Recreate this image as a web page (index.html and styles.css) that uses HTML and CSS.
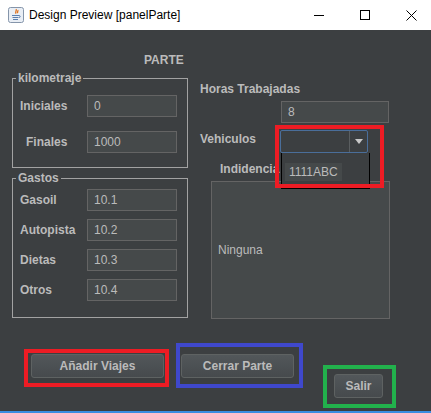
FILE: index.html
```html
<!DOCTYPE html>
<html lang="es">
<head>
<meta charset="utf-8">
<title>Design Preview [panelParte]</title>
<link rel="stylesheet" href="styles.css">
</head>
<body>
<div class="window">
  <header class="titlebar">
    <svg class="app-icon" width="16" height="16" viewBox="0 0 16 16">
      <rect x="0.5" y="0.5" width="15" height="15" rx="2" fill="#e9eef5" stroke="#8595aa"/>
      <path d="M8 2.2c1.2 1.4-1.2 2.4 0 4.4M9.8 3.2c.6 1-1 1.6 0 3" stroke="#e0701a" stroke-width="1.3" fill="none"/>
      <path d="M4 8.5h7M4.5 10.5h6M5 12.5h5M11 8.5c1.6 0 1.6 2 0 2" stroke="#5b7fb0" fill="none"/>
    </svg>
    <span class="title-text">Design Preview [panelParte]</span>
    <div class="controls">
      <span class="ctl"><svg width="10" height="10" viewBox="0 0 10 10"><path d="M0 5.5h10" stroke="#000"/></svg></span>
      <span class="ctl"><svg width="10" height="10" viewBox="0 0 10 10"><rect x="0.5" y="0.5" width="9" height="9" fill="none" stroke="#000"/></svg></span>
      <span class="ctl"><svg width="11" height="11" viewBox="0 0 11 11"><path d="M0.5 0.5l10 10M10.5 0.5l-10 10" stroke="#000"/></svg></span>
    </div>
  </header>

  <main class="content">
    <div class="form">
      <section class="left">
        <h1 class="heading">PARTE</h1>
        <fieldset class="group km">
          <legend>kilometraje</legend>
          <div class="row first"><label>Iniciales</label><input class="field" value="0" readonly></div>
          <div class="row second"><label class="indent">Finales</label><input class="field" value="1000" readonly></div>
        </fieldset>
        <fieldset class="group gastos">
          <legend>Gastos</legend>
          <div class="row first"><label>Gasoil</label><input class="field" value="10.1" readonly></div>
          <div class="row next"><label>Autopista</label><input class="field" value="10.2" readonly></div>
          <div class="row next"><label>Dietas</label><input class="field" value="10.3" readonly></div>
          <div class="row next"><label>Otros</label><input class="field" value="10.4" readonly></div>
        </fieldset>
      </section>

      <section class="right">
        <div class="caption">Horas Trabajadas</div>
        <input class="field horas" value="8" readonly>
        <div class="combo-row">
          <div class="caption veh">Vehiculos</div>
          <div class="combo">
            <span class="combo-value"></span>
            <span class="combo-arrow"><svg width="8" height="5" viewBox="0 0 8 5"><path d="M0 0h8L4 5z" fill="#c8c8c8"/></svg></span>
            <div class="popup"><span class="item">1111ABC</span></div>
            <div class="mark mark-red"></div>
          </div>
        </div>
        <div class="caption inc">Indidencia</div>
        <div class="area">Ninguna</div>
      </section>
    </div>

    <div class="actions">
      <div class="frame frame-red"><button class="btn b1">Añadir Viajes</button></div>
      <div class="frame frame-blue"><button class="btn b2">Cerrar Parte</button></div>
      <div class="frame frame-green"><button class="btn b3">Salir</button></div>
    </div>
  </main>
  <div class="taskbar"></div>
</div>
</body>
</html>
```

FILE: styles.css
```css
* { box-sizing: border-box; }

body {
  margin: 0;
  width: 431px;
  height: 413px;
  overflow: hidden;
  font-family: "Liberation Sans", Arial, sans-serif;
  background: #3c3f41;
}

.window {
  display: flex;
  flex-direction: column;
  height: 413px;
}

.titlebar {
  height: 30px;
  flex: none;
  background: #ffffff;
  display: flex;
  align-items: center;
  padding-left: 8px;
  color: #000;
  font-size: 12px;
  overflow: hidden;
}

.app-icon { margin-right: 5px; flex: none; }
.title-text { flex: 1; }

.controls {
  display: flex;
  margin-right: -3px;
  height: 30px;
}
.ctl {
  width: 46px;
  display: flex;
  align-items: center;
  justify-content: center;
}

.content {
  flex: 1;
  padding: 23px 0 0 12px;
  display: flex;
  flex-direction: column;
  color: #bbbbbb;
  overflow: hidden;
}

.form { display: flex; gap: 12px; }

.left { width: 176px; }

.heading {
  margin: 0 0 4px 132px;
  font: bold 12px/14px "Liberation Sans", Arial, sans-serif;
  color: #bbbbbb;
}

.group {
  margin: 0;
  padding: 0;
  width: 176px;
  min-width: 0;
  border: 1px solid #a2a2a2;
}
.group legend {
  margin-left: 3px;
  padding: 0 2px;
  font: bold 12px/15px "Liberation Sans", Arial, sans-serif;
  color: #bbbbbb;
}
.km { padding-bottom: 14px; }
.gastos { margin-top: 3px; padding-bottom: 16px; }

.row {
  display: flex;
  align-items: center;
  height: 22px;
  padding-left: 7px;
}
.km .first { margin-top: 9px; }
.km .second { margin-top: 14px; }
.gastos .first { margin-top: 3px; }
.gastos .next { margin-top: 8px; }

.row label {
  width: 67px;
  font: bold 12px "Liberation Sans", Arial, sans-serif;
}
.row label.indent { padding-left: 6px; }

.field {
  width: 90px;
  height: 22px;
  margin: 0;
  background: #45494a;
  border: 1px solid #646464;
  color: #bbbbbb;
  padding: 0 0 0 6px;
  font: 12px "Liberation Sans", Arial, sans-serif;
  outline: none;
}

.right {
  width: 190px;
  padding-top: 29px;
}
.caption {
  font: bold 12px/14px "Liberation Sans", Arial, sans-serif;
}
.horas {
  display: block;
  margin: 5px 0 0 81px;
  width: 108px;
}

.combo-row {
  display: flex;
  margin-top: 7px;
}
.veh { width: 80px; margin-top: 2px; }

.combo {
  position: relative;
  width: 88px;
  height: 23px;
  border: 1px solid #4a6e9a;
  border-radius: 2px;
  background: #3c3f41;
  display: flex;
}
.combo-value { flex: 1; }
.combo-arrow {
  width: 18px;
  border-left: 1px solid #5a5e60;
  display: flex;
  align-items: center;
  justify-content: center;
}

.popup {
  position: absolute;
  top: 22px;
  left: 0;
  width: 89px;
  height: 36px;
  background: #3c3f41;
  border: 1px solid #000;
  border-top: 0;
  padding: 9px 0 0 3px;
  z-index: 2;
}
.item {
  display: inline-block;
  height: 18px;
  line-height: 18px;
  padding: 0 4px;
  background: #45494a;
  color: #bbbbbb;
  font-size: 12px;
}

.mark-red {
  position: absolute;
  left: -6px;
  top: -6px;
  width: 109px;
  height: 63px;
  border: 4px solid #ed1c24;
  z-index: 3;
}

.inc { margin: 9px 0 0 20px; }

.area {
  margin: 5px 0 0 11px;
  width: 179px;
  height: 138px;
  background: #45494a;
  border: 1px solid #646464;
  display: flex;
  align-items: center;
  padding-left: 6px;
  font-size: 12px;
}

.actions {
  display: flex;
  align-items: flex-start;
  margin-top: 24px;
}

.frame { border: 4px solid; }
.frame-red {
  border-color: #ed1c24;
  width: 145px;
  height: 38px;
  margin: 6px 0 0 12px;
  padding: 1px 0 0 3px;
}
.frame-blue {
  border-color: #3f48cc;
  width: 127px;
  height: 45px;
  margin-left: 7px;
  padding: 7px 0 0 1px;
}
.frame-green {
  border-color: #22b14c;
  width: 73px;
  height: 43px;
  margin: 22px 0 0 20px;
  padding: 5px 0 0 7px;
}

.btn {
  display: block;
  height: 24px;
  margin: 0;
  padding: 0;
  border: 1px solid #5e6262;
  border-radius: 3px;
  background: linear-gradient(#52575a, #464a4d);
  color: #bbbbbb;
  font: bold 12px "Liberation Sans", Arial, sans-serif;
}
.b1 { width: 133px; }
.b2 { width: 113px; }
.b3 { width: 49px; }

.taskbar {
  height: 2px;
  flex: none;
  background: #3b8de0;
}
```
